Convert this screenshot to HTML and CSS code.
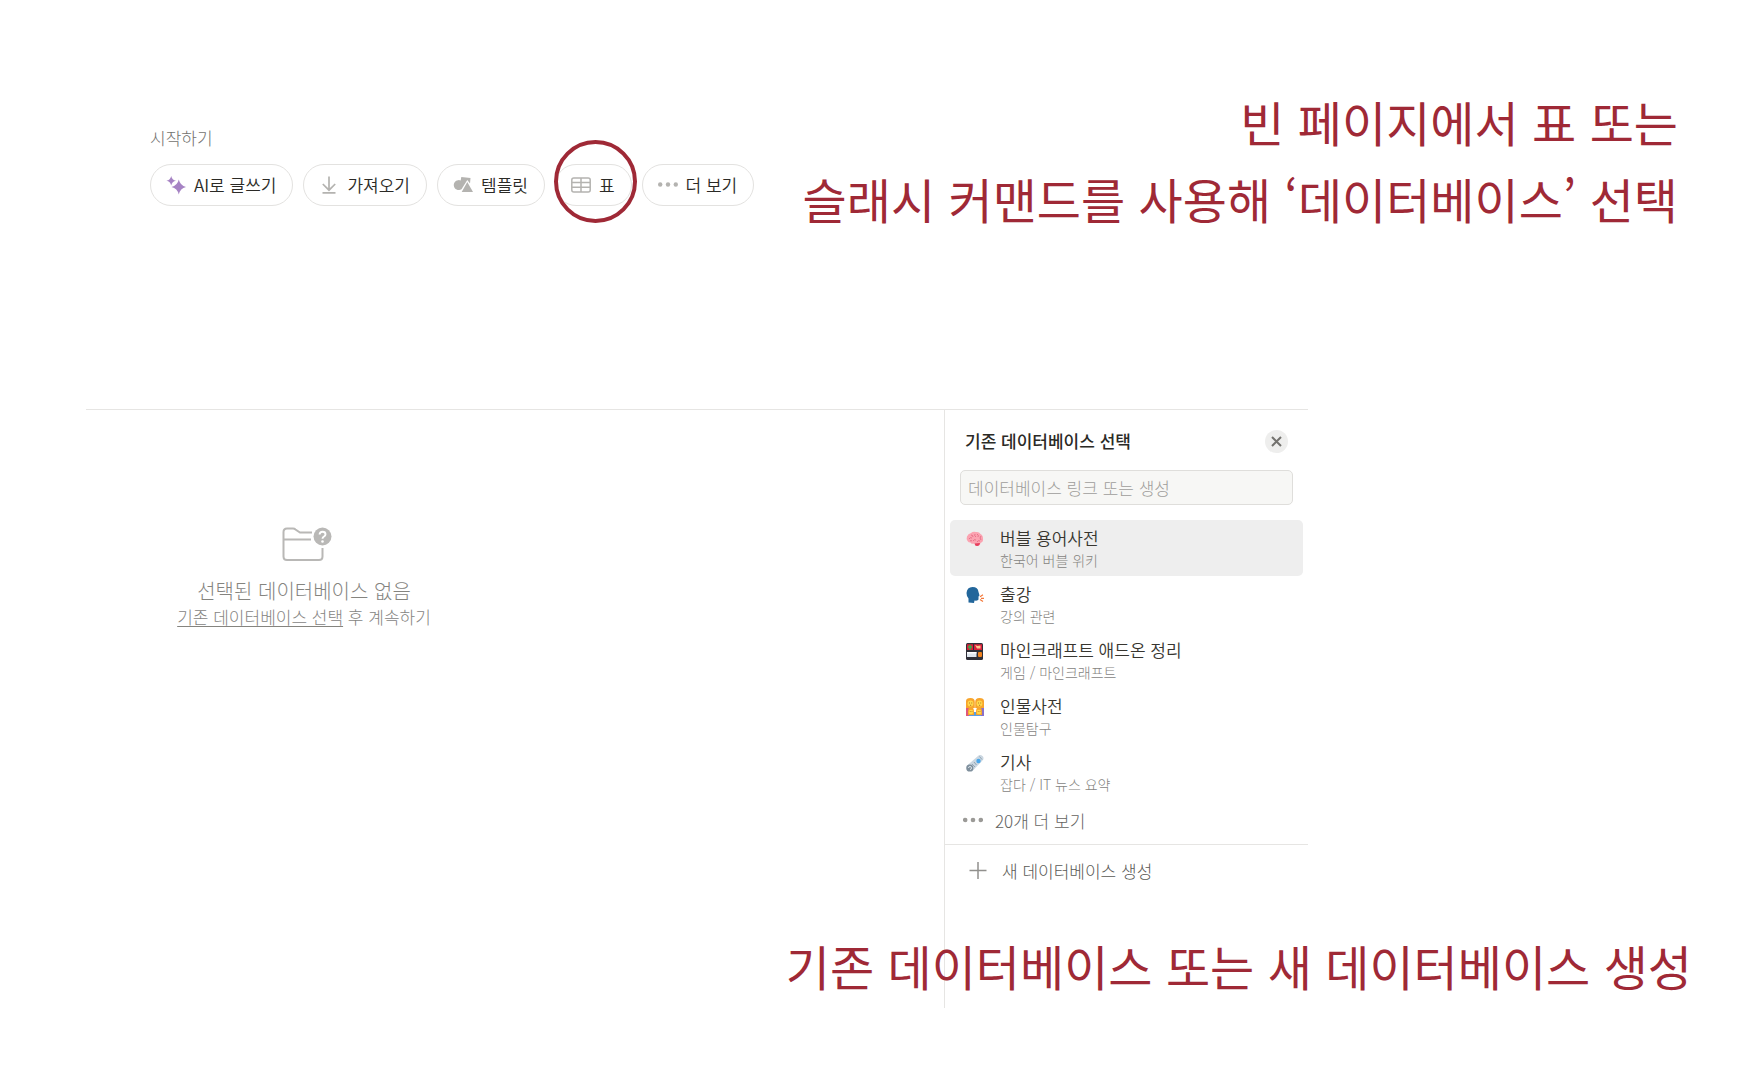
FILE: index.html
```html
<!DOCTYPE html>
<html lang="ko">
<head>
<meta charset="utf-8">
<title>데이터베이스 선택</title>
<link rel="stylesheet" href="styles.css">
</head>
<body>
<header class="top">
  <section class="start">
    <p class="start-label">시작하기</p>
    <div class="pills">
      <button class="pill" type="button">
        <svg class="icon" viewBox="0 0 20 20" fill="#a683c4"><path d="M5.200 1Q6 5 10 5.800Q6 6.600 5.200 10.600Q4.400 6.600 .4 5.800Q4.400 5 5.200 1ZM12.800 4.500Q14.200 10.600 20 12Q14.200 13.400 12.800 19.500Q11.400 13.400 5.500 12Q11.400 10.600 12.800 4.500Z"/></svg>
        AI로 글쓰기
      </button>
      <button class="pill" type="button">
        <svg class="icon" viewBox="0 0 20 20" fill="none" stroke="#b4b3b0" stroke-width="1.700"><path d="M10 1.500V15M3.800 9L10 15.200L16.200 9M3.500 17.800H16.500"/></svg>
        가져오기
      </button>
      <button class="pill" type="button">
        <svg class="icon" viewBox="0 0 20 20" fill="#b4b3b0"><path d="M8.300 2L17.500 3L17 8.500L14.300 5L8.500 14.300A5 5 0 1 1 7.700 5.500Z"/><path d="M14.300 7L20 17H8.700Z"/></svg>
        템플릿
      </button>
      <span class="marked">
        <button class="pill" type="button">
          <svg class="icon" viewBox="0 0 20 20" fill="none" stroke="#b4b3b0" stroke-width="1.500"><rect x=".8" y="3" width="18.400" height="14" rx="2"/><path d="M1 7.500H19M1 12.200H19M10 3V17"/></svg>
          표
        </button>
      </span>
      <button class="pill" type="button">
        <svg class="icon" viewBox="0 0 20 20" fill="#b4b3b0"><circle cx="2.200" cy="9.500" r="2.200"/><circle cx="10" cy="9.500" r="2.200"/><circle cx="17.800" cy="9.500" r="2.200"/></svg>
        더 보기
      </button>
    </div>
  </section>
  <h1 class="note">빈 페이지에서 표 또는<br>슬래시 커맨드를 사용해 ‘데이터베이스’ 선택</h1>
</header>

<main class="board">
  <section class="view">
    <div class="empty">
      <svg class="folder" viewBox="0 0 50 36" fill="none"><path d="M30 5.500H18L13.500 2.500Q12.500 1.500 11 1.500H5Q1.500 1.500 1.500 5V29.500Q1.500 33 5 33H37Q40.500 33 40.500 29.500V21M1.500 12.500H29" stroke="#b9b8b6" stroke-width="2"/><circle cx="40.500" cy="9.500" r="9" fill="#b9b8b6"/><path d="M37.600 7.500Q37.600 4.700 40.600 4.700Q43.500 4.700 43.500 7.200Q43.500 8.500 42 9.500Q40.500 10.300 40.500 11.800" stroke="#fff" stroke-width="1.900"/><circle cx="40.500" cy="14.500" r="1.300" fill="#fff"/></svg>
      <p class="empty-title">선택된 데이터베이스 없음</p>
      <p class="empty-text"><a href="#picker">기존 데이터베이스 선택</a> 후 계속하기</p>
    </div>
  </section>
  <aside class="panel" id="picker">
    <div class="panel-head">
      <h2>기존 데이터베이스 선택</h2>
      <button class="close" type="button" aria-label="닫기"><svg viewBox="0 0 23 23" stroke="#73726e" stroke-width="2"><path d="M7 7L16 16M16 7L7 16"/></svg></button>
    </div>
    <input class="search" type="text" aria-label="데이터베이스 검색" placeholder="데이터베이스 링크 또는 생성">
    <ul class="list">
      <li><button class="row selected" type="button">
        <svg class="emoji" viewBox="0 0 18 18"><path d="M1.500 11Q0 9 1 6.500Q2 3.500 5 3Q7 1 10 2Q13 1.500 14.500 4Q17 5 17 8.500Q17.500 12 14.500 13Q14 16 11 16Q9 16 8.500 13.500Q5 14.500 4.500 12.500Q2.500 12.500 1.500 11Z" fill="#fba3b1"/><path d="M3 9Q4 7 6 8M5 5Q7 5 7 7M9 4Q8 6 10 7M11 4Q13 5 12 7M15 6Q13 8 15 10M7 11Q8 9 10 10M11 12Q12 10 14 11M4 11Q5 10 6 11" fill="none" stroke="#e2667f" stroke-width=".8"/><path d="M8.500 13.500L14 13Q13.500 16 11 16Q9 16 8.500 13.500" fill="#e63d5c"/></svg>
        <span class="texts"><span class="name">버블 용어사전</span><span class="path">한국어 버블 위키</span></span></button></li>
      <li><button class="row" type="button">
        <svg class="emoji" viewBox="0 0 18 18"><path d="M2.500 16.500V12.500Q.5 10.500 .5 7Q1 1 6.500 1Q12 1 12.500 6L13.500 9.500L12.500 10.500V13.500Q12 15 8.500 14.500L8 17Z" fill="#22669b"/><path d="M14 10.800L17 8.800M15 12.300H18M14 13.500L17 15.500" stroke="#f4793b" stroke-width="1.200"/></svg>
        <span class="texts"><span class="name">출강</span><span class="path">강의 관련</span></span></button></li>
      <li><button class="row" type="button">
        <svg class="emoji" viewBox="0 0 18 18"><rect y="1" width="17" height="17" rx="1.500" fill="#2f2f38"/><path d="M1 2.200H7V8H1ZM8 2.200H16V8H8Z" fill="#d81f3b"/><path d="M3 3H5V4H6V6H5V7.500H3V6H2V4H3Z" fill="#4c9a45"/><path d="M9 3L11.500 4L14.500 3.500L14.500 6.500L11 6.500Z" fill="#ffc48c"/><path d="M1 10H10.500V15H1Z" fill="#dfe6ee"/><path d="M1 10H10.500V11.500H1Z" fill="#fff"/><rect x="12" y="10" width="4" height="5" rx="1" fill="#f2831f"/></svg>
        <span class="texts"><span class="name">마인크래프트 애드온 정리</span><span class="path">게임 / 마인크래프트</span></span></button></li>
      <li><button class="row" type="button">
        <svg class="emoji" viewBox="0 0 18 18"><path d="M0 10H5V18H0Z" fill="#df587b"/><path d="M13 10H18V18H13Z" fill="#8a70c8"/><path d="M3 14H15V18H3Z" fill="#5b9fe0"/><path d="M0 10V3Q0 0 4.500 0Q8.800 0 8.800 4V10ZM9.200 10V4Q9.200 0 13.500 0Q18 0 18 3V10ZM2 14Q2 9 5 9Q8 9 8 14V17H2ZM10 14Q10 9 13 9Q16 9 16 14V17H10Z" fill="#f8a52c"/><g fill="#ffd84a"><circle cx="4.500" cy="5.500" r="2.900"/><circle cx="13.500" cy="5.500" r="2.900"/><circle cx="5" cy="14" r="2.300"/><circle cx="13" cy="14" r="2.300"/></g><path d="M3 5H4M5.200 5H6.200M12 5H13M14.200 5H15.200M4 7.300H5.200M13 7.300H14.200M3.800 13.500H4.600M5.600 13.500H6.400M11.800 13.500H12.600M13.600 13.500H14.400" stroke="#a4632b" stroke-width=".8"/></svg>
        <span class="texts"><span class="name">인물사전</span><span class="path">인물탐구</span></span></button></li>
      <li><button class="row" type="button">
        <svg class="emoji" viewBox="0 0 18 18"><path d="M.5 12L12 2Q14 0 17 2.500Q18.500 5 16 7L6 17.500Z" fill="#cbd7e1"/><circle cx="3.800" cy="14" r="3.600" fill="#7f8f9c"/><path d="M2.500 14A1.500 1.500 0 1 1 4 15.500" stroke="#d9e3ea" fill="none"/><circle cx="12.500" cy="7" r="2.200" fill="#4aa7ea"/><path d="M6 10L9 13M8 8L10.500 11M13.500 2.500L16 5.500" stroke="#8598a8" stroke-width=".8"/></svg>
        <span class="texts"><span class="name">기사</span><span class="path">잡다 / IT 뉴스 요약</span></span></button></li>
    </ul>
    <button class="more" type="button">
      <svg class="icon" viewBox="0 0 20 20" fill="#9b9a97"><circle cx="2.200" cy="9" r="2.300"/><circle cx="10" cy="9" r="2.300"/><circle cx="17.800" cy="9" r="2.300"/></svg>
      20개 더 보기
    </button>
    <button class="create" type="button">
      <svg class="icon" viewBox="0 0 20 20" stroke="#91908d" stroke-width="1.500"><path d="M10 1V18M1.500 9.500H18.500"/></svg>
      새 데이터베이스 생성
    </button>
  </aside>
  <p class="note note-bottom">기존 데이터베이스 또는 새 데이터베이스 생성</p>
</main>
</body>
</html>
```
FILE: styles.css
```css
*, *::after { box-sizing: border-box; }

body {
  margin: 0;
  background: #fff;
  color: #2b2a26;
  font: 350 17px/24px "Noto Sans CJK KR", "Noto Sans", sans-serif;
}

h1, h2, p, ul { margin: 0; padding: 0; }
ul { list-style: none; }

button, input {
  margin: 0;
  padding: 0;
  border: 0;
  background: none;
  color: inherit;
  font: inherit;
}

svg { display: block; flex: none; }

.top {
  display: flex;
  justify-content: space-between;
  padding: 83px 69px 0 150px;
}

.start { padding-top: 43px; }
.start-label { color: #73726e; font-weight: 300; }

.pills {
  display: flex;
  gap: 10px;
  margin-top: 14px;
}

.pill {
  display: flex;
  align-items: center;
  gap: 8px;
  height: 42px;
  padding: 0 16px 0 15px;
  border: 1px solid #e3e2e0;
  border-radius: 21px;
  white-space: nowrap;
}

.icon { width: 20px; height: 20px; }

.marked { position: relative; }
.marked::after {
  content: "";
  position: absolute;
  top: -24px;
  left: -1px;
  width: 83px;
  height: 83px;
  border: 4px solid #9f2936;
  border-radius: 50%;
}

.note {
  color: #9f2936;
  font-size: 48px;
  font-weight: 400;
  line-height: 77px;
  text-align: right;
  white-space: nowrap;
}

.board {
  position: relative;
  display: flex;
  margin-top: 172px;
  padding-left: 86px;
}

.view {
  width: 858px;
  border-top: 1px solid #e6e5e3;
}

.empty {
  display: flex;
  flex-direction: column;
  align-items: center;
  width: 436px;
  padding-top: 117px;
  color: #85847f;
  font-weight: 300;
}
.folder { width: 50px; height: 36px; margin-left: 6px; }
.empty-title { margin-top: 14px; font-size: 20px; line-height: 28px; }
.empty-text a { color: inherit; text-underline-offset: 2px; text-decoration-thickness: 1px; }

.panel {
  width: 364px;
  height: 599px;
  border-top: 1px solid #e6e5e3;
  border-left: 1px solid #e6e5e3;
}

.panel-head {
  display: flex;
  align-items: center;
  justify-content: space-between;
  padding: 19px 20px 0;
}
.panel-head h2 { font-size: 17px; font-weight: 500; }

.close {
  width: 23px;
  height: 23px;
  border-radius: 50%;
  background: #eeeeed;
}

.search {
  display: block;
  width: 333px;
  height: 35px;
  margin: 17px 15px 15px;
  padding: 0 7px;
  border: 1px solid #dfdedb;
  border-radius: 5px;
  background: #f7f7f5;
  font-weight: 300;
}
.search::placeholder { color: #9f9e9b; opacity: 1; }

.list { padding: 0 5px; }

.row {
  display: flex;
  gap: 16px;
  width: 100%;
  height: 56px;
  padding: 6px 16px 0;
  border-radius: 5px;
  text-align: left;
}
.selected { background: #eeeeee; }

.emoji { width: 18px; height: 18px; margin-top: 4px; }
.texts { display: flex; flex-direction: column; }
.name { color: #37352f; }
.path { color: #85847f; font-size: 14px; font-weight: 300; line-height: 20px; }

.more, .create {
  display: flex;
  align-items: center;
  width: 100%;
  font-weight: 300;
}
.more {
  gap: 12px;
  height: 41px;
  margin-bottom: 3px;
  padding: 0 18px;
  color: #64635f;
}
.create {
  gap: 14px;
  height: 53px;
  padding: 0 23px;
  border-top: 1px solid #e6e5e3;
  color: #5a5955;
}

.note-bottom {
  position: absolute;
  right: 55px;
  bottom: 4px;
}
```
